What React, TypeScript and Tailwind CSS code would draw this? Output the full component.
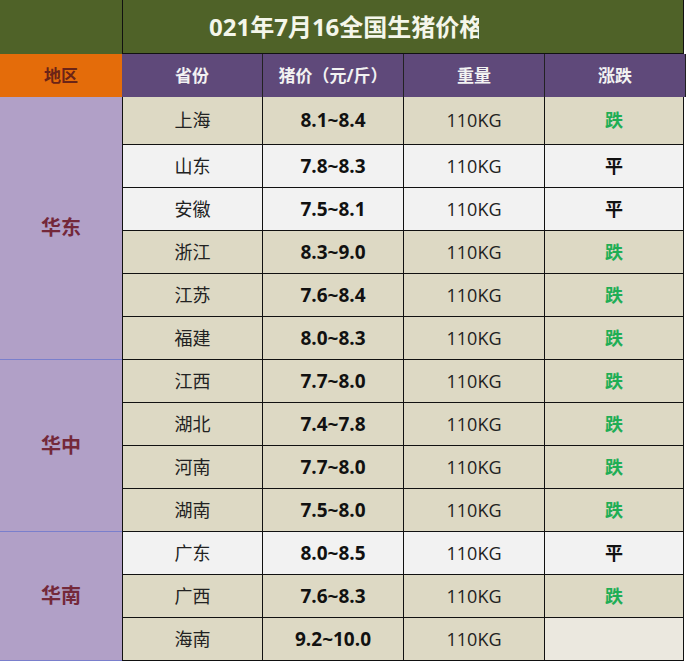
import React from 'react';

type Row = { prov: string; price: string; weight: string; change: string; light?: boolean; tall?: boolean };

const groups: { region: string; rows: Row[] }[] = [
  {
    region: '华东',
    rows: [
      { prov: '上海', price: '8.1~8.4', weight: '110KG', change: '跌', tall: true },
      { prov: '山东', price: '7.8~8.3', weight: '110KG', change: '平', light: true },
      { prov: '安徽', price: '7.5~8.1', weight: '110KG', change: '平', light: true },
      { prov: '浙江', price: '8.3~9.0', weight: '110KG', change: '跌' },
      { prov: '江苏', price: '7.6~8.4', weight: '110KG', change: '跌' },
      { prov: '福建', price: '8.0~8.3', weight: '110KG', change: '跌' },
    ],
  },
  {
    region: '华中',
    rows: [
      { prov: '江西', price: '7.7~8.0', weight: '110KG', change: '跌' },
      { prov: '湖北', price: '7.4~7.8', weight: '110KG', change: '跌' },
      { prov: '河南', price: '7.7~8.0', weight: '110KG', change: '跌' },
      { prov: '湖南', price: '7.5~8.0', weight: '110KG', change: '跌' },
    ],
  },
  {
    region: '华南',
    rows: [
      { prov: '广东', price: '8.0~8.5', weight: '110KG', change: '平', light: true },
      { prov: '广西', price: '7.6~8.3', weight: '110KG', change: '跌' },
      { prov: '海南', price: '9.2~10.0', weight: '110KG', change: '' },
    ],
  },
];

const font = { fontFamily: '"Open Sans", "Noto Sans CJK SC", sans-serif' };

export default function App() {
  return (
    <div className="w-[686px] h-[661px] overflow-hidden bg-white" style={font}>
      {/* title bar */}
      <div className="flex h-[54px]">
        <div className="w-[122px] bg-[#4f6228]" />
        <div className="w-[562px] bg-[#4f6228] border-l border-b border-r border-[#111] flex items-center pl-[86px]">
          <span className="w-[270px] overflow-hidden whitespace-nowrap text-[24px] font-bold text-[#f4f6ea] leading-none">
            021年7月16全国生猪价格
          </span>
        </div>
      </div>

      {/* header row */}
      <div className="flex h-[43px] text-[17px] font-bold">
        <div className="w-[122px] bg-[#e46c0a] flex items-center justify-center text-[#6b2417]">地区</div>
        {['省份', '猪价（元/斤）', '重量', '涨跌'].map((h) => (
          <div
            key={h}
            className="w-[141px] bg-[#5f497a] border-r border-[#222] flex items-center justify-center text-[#f2f2f2]"
          >
            {h}
          </div>
        ))}
      </div>

      {groups.map((g) => (
        <div key={g.region} className="flex">
          <div className="w-[122px] shrink-0 bg-[#b1a0c7] border-b border-[#7a7fcc] flex items-center justify-center text-[20px] font-bold text-[#74283a]">
            {g.region}
          </div>
          <div className="flex flex-col border-l border-[#111]">
            {g.rows.map((r) => (
              <div
                key={r.prov}
                className={`flex border-b border-[#111] ${r.tall ? 'h-[48px]' : 'h-[43px]'} ${
                  r.light ? 'bg-[#f2f2f2]' : 'bg-[#ddd9c4]'
                }`}
              >
                <div className="w-[140px] border-r border-[#111] flex items-center justify-center text-[18px] text-[#222]">
                  {r.prov}
                </div>
                <div className="w-[141px] border-r border-[#111] flex items-center justify-center text-[19px] font-bold text-[#111]">
                  {r.price}
                </div>
                <div className="w-[141px] border-r border-[#111] flex items-center justify-center text-[18px] text-[#222]">
                  {r.weight}
                </div>
                <div
                  className={`w-[139px] border-r border-[#111] flex items-center justify-center text-[18px] font-bold ${
                    r.change === '跌' ? 'text-[#1fae55]' : 'text-[#111]'
                  } ${r.change === '' ? 'bg-[#ebe8df]' : ''}`}
                >
                  {r.change}
                </div>
              </div>
            ))}
          </div>
        </div>
      ))}
    </div>
  );
}
